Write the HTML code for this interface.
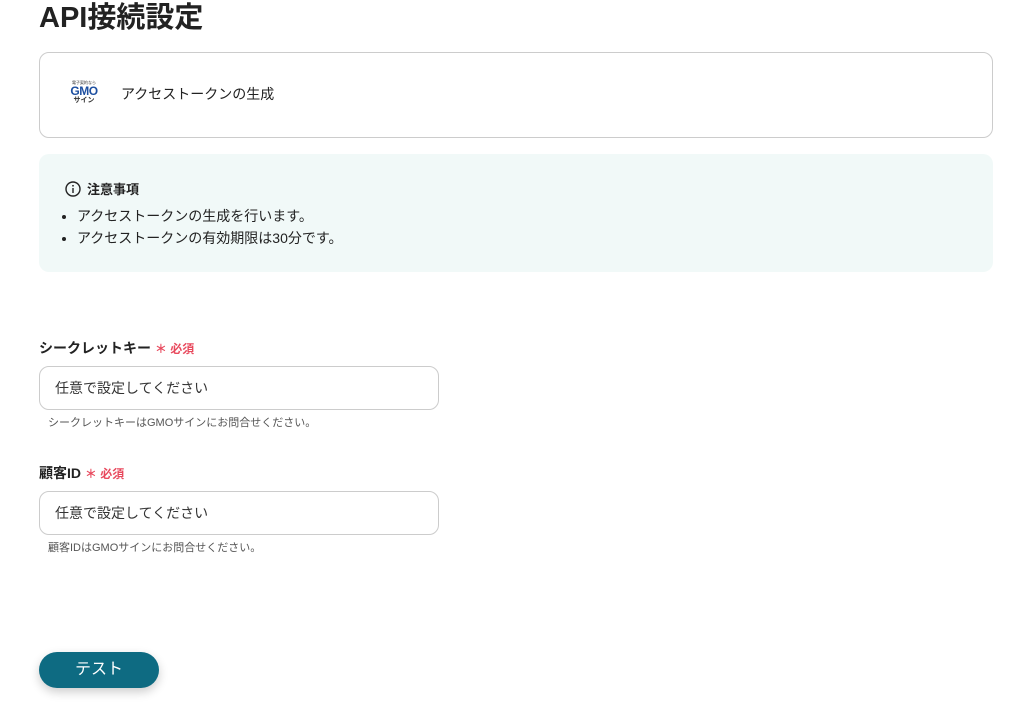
<!DOCTYPE html>
<html><head><meta charset="utf-8"><style>
body{margin:0;width:1022px;height:722px;background:#fff;font-family:"Liberation Sans","Noto Sans CJK JP",sans-serif;color:#222;position:relative;overflow:hidden}
.a{position:absolute}
h1{position:absolute;left:39px;top:0;margin:0;font-size:29px;font-weight:bold;line-height:36px;color:#222}
.card{left:39px;top:52px;width:952px;height:84px;border:1px solid #ccc;border-radius:10px}
.note{left:39px;top:154px;width:954px;height:118px;background:#f1f9f8;border-radius:10px}
.lbl{font-size:14px;font-weight:bold}
.req{color:#e8495d;font-size:12px;font-weight:bold}
.inp{width:400px;height:44px;border:1px solid #ccc;border-radius:10px;font-size:14px;line-height:42px;padding-left:15px;box-sizing:border-box;color:#333}
.hint{font-size:11px;color:#555}
.btn{left:39px;top:652px;width:120px;height:36px;background:#0e6b82;border-radius:18px;color:#fff;font-size:16px;text-align:center;line-height:36px;box-shadow:0 4px 10px rgba(0,0,0,.2)}
</style></head><body>
<h1>API接続設定</h1>
<div class="a card">
 <div class="a" style="left:26px;top:28px;width:36px;text-align:center;line-height:1">
  <div style="font-size:4px;color:#333">電子契約なら</div>
  <div style="font-size:12px;font-weight:bold;color:#1d4fa0;letter-spacing:-0.5px">GMO</div>
  <div style="font-size:7px;font-weight:bold;color:#333">サイン</div>
 </div>
 <div class="a" style="left:81px;top:31px;font-size:14px">アクセストークンの生成</div>
</div>
<div class="a note">
 <div class="a" style="left:26px;top:25px;font-size:13px;font-weight:bold;display:flex;align-items:center;gap:6px">
  <svg width="16" height="16" viewBox="0 0 16 16"><circle cx="8" cy="8" r="7" fill="none" stroke="#222" stroke-width="1.4"/><rect x="7.3" y="7" width="1.4" height="5" fill="#222"/><circle cx="8" cy="4.8" r=".9" fill="#222"/></svg>注意事項</div>
 <ul class="a" style="left:0;top:51px;margin:0;padding-left:38px;font-size:14px;line-height:22px">
  <li>アクセストークンの生成を行います。</li>
  <li>アクセストークンの有効期限は30分です。</li>
 </ul>
</div>
<div class="a lbl" style="left:39px;top:338px">シークレットキー <span class="req">＊ 必須</span></div>
<div class="a inp" style="left:39px;top:366px">任意で設定してください</div>
<div class="a hint" style="left:48px;top:414px">シークレットキーはGMOサインにお問合せください。</div>
<div class="a lbl" style="left:39px;top:463px">顧客ID <span class="req">＊ 必須</span></div>
<div class="a inp" style="left:39px;top:491px">任意で設定してください</div>
<div class="a hint" style="left:48px;top:539px">顧客IDはGMOサインにお問合せください。</div>
<div class="a btn">テスト</div>
</body></html>
